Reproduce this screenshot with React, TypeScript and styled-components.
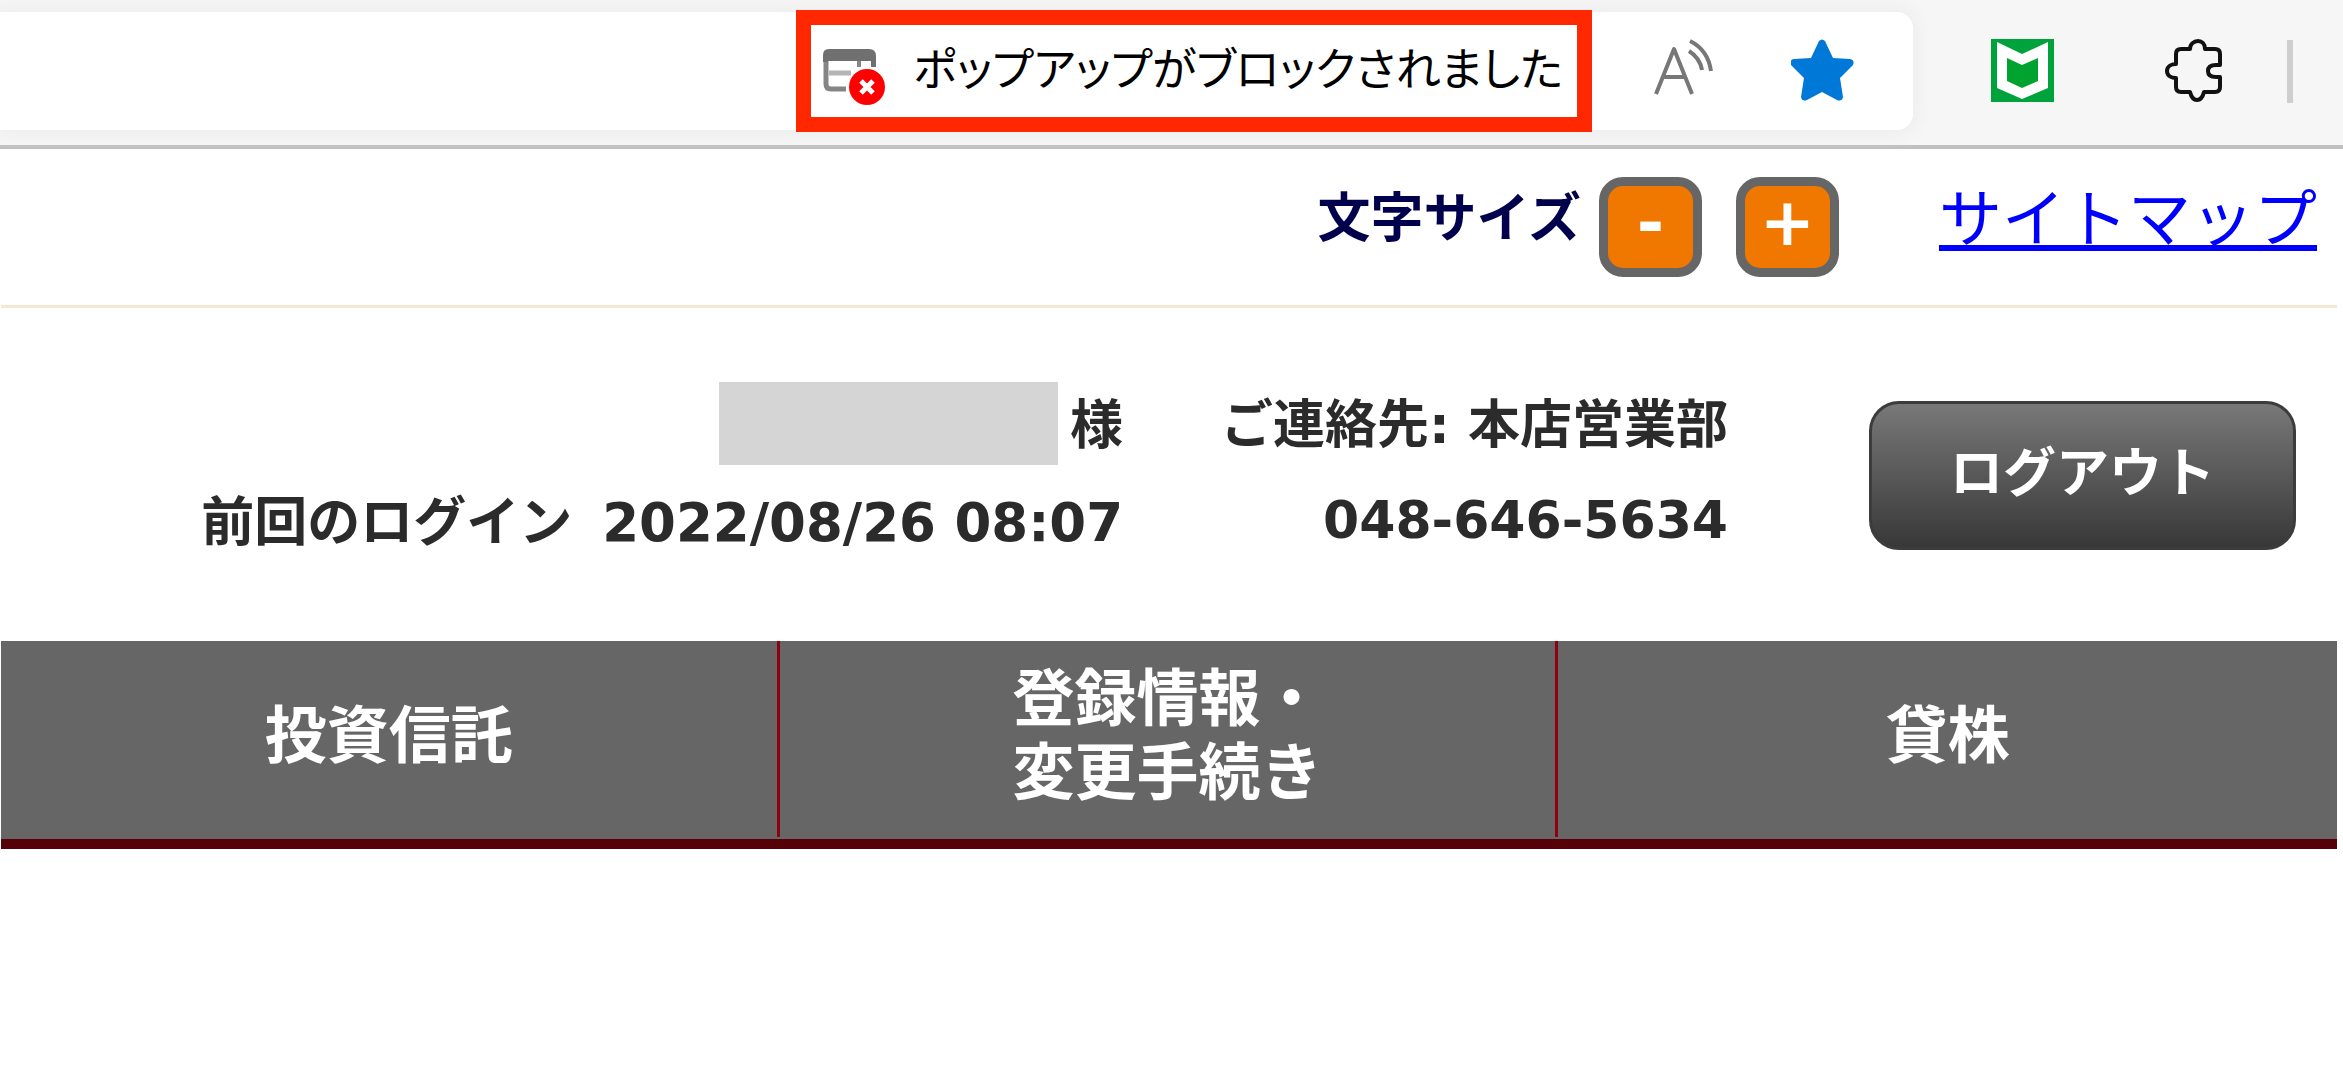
import React from 'react';
import styled, { createGlobalStyle } from 'styled-components';

const GlobalStyle = createGlobalStyle`
  *, *::before, *::after { box-sizing: border-box; }
  body {
    margin: 0;
    background: #fff;
    color: #2b2b2b;
    font-family: 'DejaVu Sans', 'Noto Sans CJK JP', sans-serif;
    font-size: 53px;
    font-weight: 700;
  }
  button { font: inherit; padding: 0; border: 0; background: none; cursor: pointer; }
`;

const Toolbar = styled.header`
  display: flex;
  align-items: center;
  padding: 12px 50px 15px 0;
  background: #f6f6f6;
  border-bottom: 4px solid #c0c0c0;
`;

const AddressBar = styled.div`
  flex: 1;
  min-width: 0;
  height: 118px;
  display: flex;
  align-items: center;
  gap: 76px;
  padding-right: 58px;
  background: #fff;
  border-radius: 0 16px 16px 0;
  box-shadow: 0 0 16px 4px #ededed;
`;

const AddressField = styled.input`
  flex: 1;
  min-width: 0;
  height: 100%;
  border: 0;
  outline: 0;
  background: transparent;
  font: inherit;
`;

const PopupNotice = styled.button`
  display: flex;
  align-items: center;
  gap: 26px;
  height: 122px;
  margin-right: -17px;
  && {
    padding: 0 14px 0 12px;
    border: 15px solid #ff2800;
  }
  background: #fff;
  color: #000;
  white-space: nowrap;
`;

const PopupText = styled.span`
  padding-bottom: 8px;
  font-family: 'Noto Sans CJK JP', sans-serif;
  font-size: 45px;
  font-weight: 400;
  line-height: 64px;
  font-feature-settings: 'palt';
`;

const IconButton = styled.button`
  display: block;
  width: 64px;
  height: 64px;
  svg { display: block; }
`;

const Tools = styled.div`
  display: flex;
  align-items: center;
  gap: 108px;
  padding-left: 78px;
`;

const ToolDivider = styled.div`
  width: 6px;
  height: 63px;
  margin-left: -48px;
  background: #cecece;
`;

const Page = styled.div`
  padding: 0 6px 0 1px;
`;

const UtilityRow = styled.div`
  display: flex;
  justify-content: flex-end;
  align-items: flex-start;
  padding: 28px 20px 28px 0;
  border-bottom: 3px solid #f6e6d4;
`;

const SizeGroup = styled.div`
  display: flex;
  align-items: flex-start;
  gap: 34px;
  margin-right: 100px;
`;

const SizeLabel = styled.span`
  margin-right: -16px;
  color: #00004c;
  line-height: 84px;
`;

const SizeButton = styled.button`
  width: 103px;
  height: 100px;
  && {
    border: 9px solid #666;
    padding-bottom: 8px;
    background: #f07800;
  }
  border-radius: 24px;
  color: #fff;
  font-size: 66px;
  line-height: 72px;
`;

const SiteMapLink = styled.a`
  color: #00f;
  font-family: 'Noto Sans CJK JP', sans-serif;
  font-size: 63px;
  font-weight: 400;
  line-height: 74px;
  text-decoration-thickness: 6px;
  text-underline-offset: 4px;
  text-decoration-skip-ink: none;
`;

const AccountRow = styled.section`
  display: flex;
  justify-content: flex-end;
  align-items: flex-start;
  padding: 74px 41px 75px 0;
`;

const InfoBlock = styled.div`
  display: flex;
  flex-direction: column;
  align-items: flex-end;
  gap: 10px;
  line-height: 87px;
  white-space: nowrap;
`;

const Contact = styled(InfoBlock)`
  gap: 8px;
  margin: 0 141px 0 98px;
  font-size: 52px;
`;

const NameLine = styled.div`
  display: flex;
  gap: 12px;
`;

const LoginLine = styled.div`
  display: flex;
  gap: 30px;
`;

const HiddenName = styled.span`
  width: 339px;
  height: 83px;
  background: #d5d5d5;
`;

const LogoutButton = styled.button`
  width: 427px;
  height: 149px;
  margin-top: 19px;
  && {
    border: 3px solid #3c3c3c;
    padding-bottom: 14px;
    background: linear-gradient(#787878, #383838);
  }
  border-radius: 30px;
  color: #fff;
`;

const Nav = styled.nav`
  display: grid;
  grid-template-columns: repeat(3, 1fr);
  height: 208px;
  padding-bottom: 2px;
  background: #666;
  border-bottom: 10px solid #560008;
`;

const NavItem = styled.a`
  display: flex;
  align-items: center;
  justify-content: center;
  padding-bottom: 4px;
  color: #fff;
  font-size: 62px;
  line-height: 74px;
  text-decoration: none;
  &:not(:last-child) { border-right: 3px solid #900010; }
`;

const PopupIcon = () => (
  <svg width="64" height="70" viewBox="0 -12 64 70" aria-hidden="true">
    <path d="M3 12v24q0 5 5 5h15" fill="none" stroke="#858585" strokeWidth="5" />
    <path d="M0 14V7q0-6 6-6h40q7 0 7 7v11h-5v-6H5v1z" fill="#707070" />
    <path d="M36 13v6" stroke="#858585" strokeWidth="4" />
    <path d="M6 25h22" stroke="#b5b5b5" strokeWidth="5" />
    <circle cx="44" cy="39" r="18" fill="#f00" />
    <path d="M38 33l12 12M50 33l-12 12" stroke="#fff" strokeWidth="5" />
  </svg>
);

const ReadAloudIcon = () => (
  <svg width="64" height="64" viewBox="0 0 64 64" fill="none" stroke="#777" strokeWidth="4" strokeLinejoin="round" aria-hidden="true">
    <path d="M5 55L23 10l18 45M11 38h24" />
    <path d="M38 12q11 7 13 19M39 2q18 9 21 30" />
  </svg>
);

const StarIcon = () => (
  <svg width="64" height="64" viewBox="1 0 64 64" aria-hidden="true">
    <path
      d="M29 2q3-3 6 0l8 17 17 1q5 1 3 6L50 39l3 19q-1 5-6 3L32 53l-15 8q-5 2-6-3l3-19L1 26q-2-5 3-6l17-1z"
      fill="#0078d8"
    />
  </svg>
);

const ShieldIcon = () => (
  <svg width="64" height="64" viewBox="0 0 64 64" aria-hidden="true">
    <path d="M0 0h63v63H0z" fill="#00a33b" />
    <path d="M6 3l25 12L57 3v46L31 60 6 49z" fill="#fff" />
    <path d="M16 19l15 7 16-7v23l-16 7-15-7z" fill="#00a330" />
  </svg>
);

const PuzzleIcon = () => (
  <svg width="64" height="64" viewBox="0 0 64 64" fill="none" stroke="#111" strokeWidth="4" strokeLinejoin="round" aria-hidden="true">
    <path d="M27 10H18q-5 0-5 5v10c-4 0-9 2-9 7s5 7 9 7v9q0 5 5 5h9c1 4 3 8 7 8s6-4 7-8h11q5 0 5-5V38h-4c-5 0-8-2-8-6s3-6 8-6h4V15q0-5-5-5H42c0-5-3-8-7-8s-8 3-8 8z" />
  </svg>
);

export default function App() {
  return (
    <>
      <GlobalStyle />
      <Toolbar>
        <AddressBar>
          <AddressField type="text" aria-label="アドレス" />
          <PopupNotice type="button">
            <PopupIcon />
            <PopupText>ポップアップがブロックされました</PopupText>
          </PopupNotice>
          <IconButton type="button" aria-label="音声で読み上げる"><ReadAloudIcon /></IconButton>
          <IconButton type="button" aria-label="お気に入り"><StarIcon /></IconButton>
        </AddressBar>
        <Tools>
          <IconButton type="button" aria-label="McAfee"><ShieldIcon /></IconButton>
          <IconButton type="button" aria-label="拡張機能"><PuzzleIcon /></IconButton>
          <ToolDivider />
        </Tools>
      </Toolbar>
      <Page>
        <UtilityRow>
          <SizeGroup role="group" aria-labelledby="text-size">
            <SizeLabel id="text-size">文字サイズ</SizeLabel>
            <SizeButton type="button">-</SizeButton>
            <SizeButton type="button">+</SizeButton>
          </SizeGroup>
          <SiteMapLink href="#sitemap">サイトマップ</SiteMapLink>
        </UtilityRow>
        <AccountRow>
          <InfoBlock>
            <NameLine><HiddenName /><span>様</span></NameLine>
            <LoginLine><span>前回のログイン</span><time>2022/08/26 08:07</time></LoginLine>
          </InfoBlock>
          <Contact>
            <div>ご連絡先: 本店営業部</div>
            <div>048-646-5634</div>
          </Contact>
          <LogoutButton type="button">ログアウト</LogoutButton>
        </AccountRow>
        <Nav>
          <NavItem href="#fund">投資信託</NavItem>
          <NavItem href="#profile"><span>登録情報・<br />変更手続き</span></NavItem>
          <NavItem href="#lending">貸株</NavItem>
        </Nav>
      </Page>
    </>
  );
}
